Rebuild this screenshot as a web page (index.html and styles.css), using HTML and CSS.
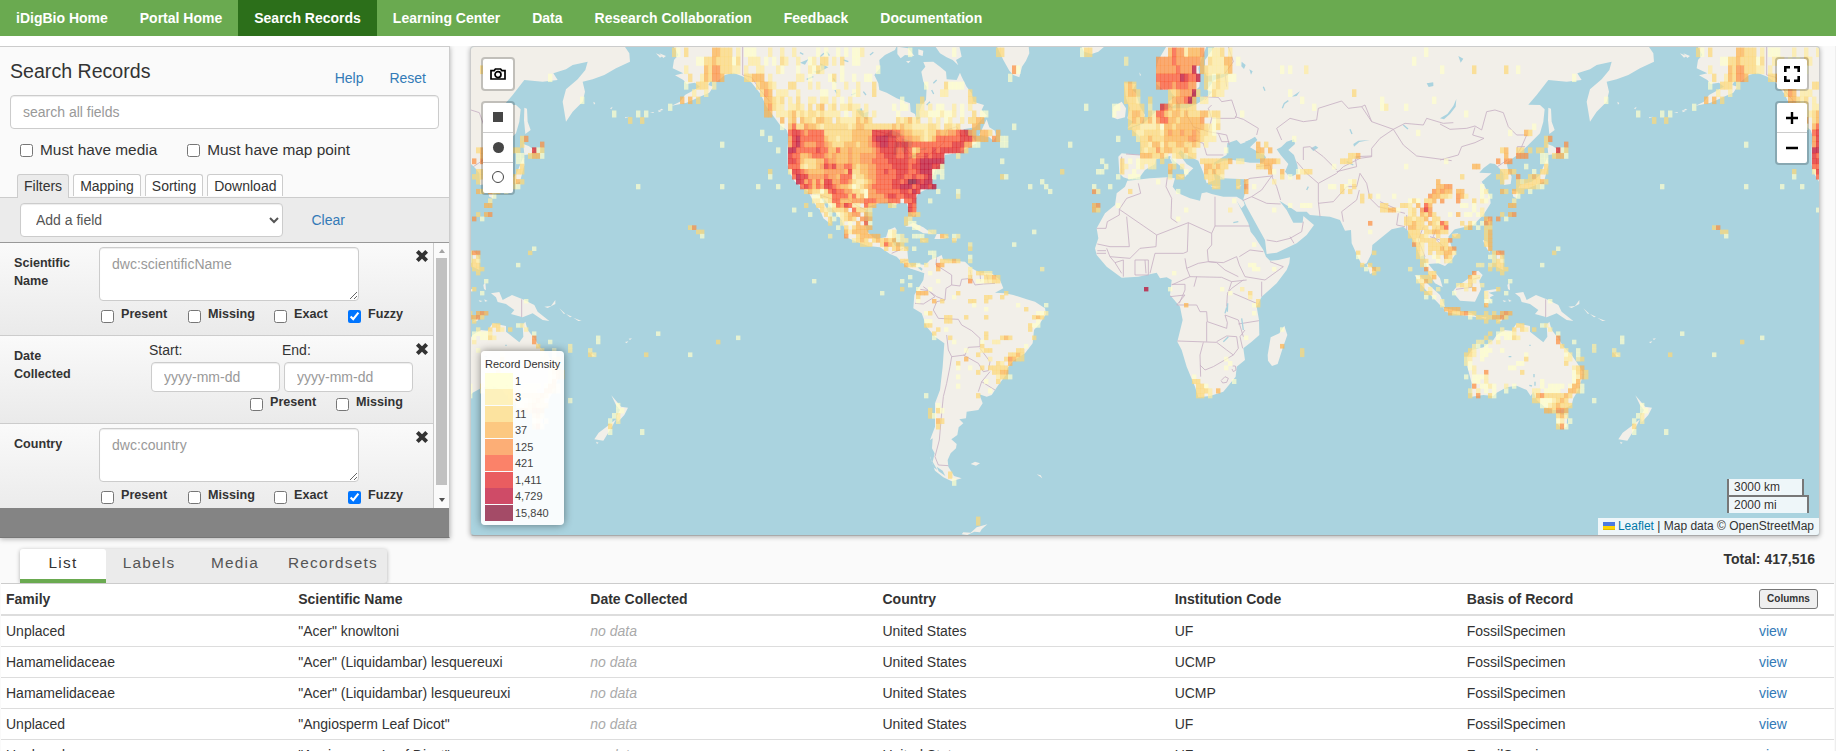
FILE: index.html
```html
<!DOCTYPE html>
<html lang="en">
<head>
<meta charset="utf-8">
<title>Search Records</title>
<link rel="stylesheet" href="styles.css">
</head>
<body>
<nav class="nav">
  <a>iDigBio Home</a><a>Portal Home</a><a class="active">Search Records</a><a>Learning Center</a><a>Data</a><a>Research Collaboration</a><a>Feedback</a><a>Documentation</a>
</nav>
<main class="page">
  <div class="top">
    <section class="panel">
      <div class="panel-head"><h1>Search Records</h1><a class="help">Help</a><a>Reset</a></div>
      <input class="field search" placeholder="search all fields">
      <div class="musts"><label><input type="checkbox">Must have media</label><label><input type="checkbox">Must have map point</label></div>
      <div class="tabs"><span class="on">Filters</span><span>Mapping</span><span>Sorting</span><span>Download</span></div>
      <div class="add"><select class="field"><option>Add a field</option></select><a>Clear</a></div>
      <div class="list">
        <div class="filters">
          <div class="filter sci">
            <b class="name">Scientific Name</b>
            <textarea class="field" placeholder="dwc:scientificName"></textarea>
            <svg class="x" viewBox="0 0 12 12"><path d="M2 2L10 10M10 2L2 10"/></svg>
            <div class="checks"><label><input type="checkbox">Present</label><label><input type="checkbox">Missing</label><label><input type="checkbox">Exact</label><label><input type="checkbox" checked>Fuzzy</label></div>
          </div>
          <div class="filter date">
            <b class="name">Date Collected</b>
            <div class="dates"><label>Start:<input class="field" placeholder="yyyy-mm-dd"></label><label>End:<input class="field" placeholder="yyyy-mm-dd"></label></div>
            <svg class="x" viewBox="0 0 12 12"><path d="M2 2L10 10M10 2L2 10"/></svg>
            <div class="checks two"><label><input type="checkbox">Present</label><label><input type="checkbox">Missing</label></div>
          </div>
          <div class="filter">
            <b class="name">Country</b>
            <textarea class="field" placeholder="dwc:country"></textarea>
            <svg class="x" viewBox="0 0 12 12"><path d="M2 2L10 10M10 2L2 10"/></svg>
            <div class="checks"><label><input type="checkbox">Present</label><label><input type="checkbox">Missing</label><label><input type="checkbox">Exact</label><label><input type="checkbox" checked>Fuzzy</label></div>
          </div>
        </div>
        <div class="bar"><i class="up"></i><i class="thumb"></i><i class="down"></i></div>
      </div>
    </section>

    <section class="map">
      <svg class="world" viewBox="471 47 1348 488">
        <defs>
        <g id="world">
          <g class="land" transform="translate(780 40) scale(.33333)">
            <path d="M-320 18L-305 45-318 60-322 85-290 100-315 106-290 120-280 132-255 128-240 140-285 165-300 185-325 197-280 188-235 168-212 158-200 140-215 135-208 122-190 125-165 105-140 98-110 110-85 128-60 160-40 200-15 235 0 255 20 270 26 290 22 330 23 375 30 400 45 425 65 442 85 455 95 475 110 500 120 510 130 535 152 552 150 535 142 510 130 485 118 462 135 480 160 510 185 540 195 570 195 590 230 605 265 618 300 622 330 642 350 650 365 665 385 683 400 688 420 680 435 692 445 690 435 675 415 672 395 680 385 665 382 630 370 620 345 618 335 600 348 590 350 570 345 562 325 570 318 592 285 597 262 575 252 545 255 515 265 500 300 488 330 485 345 495 360 488 380 490 387 510 400 530 410 520 405 480 415 460 455 440 458 410 470 380 492 365 495 345 530 340 560 325 590 310 578 290 558 288 550 268 585 262 608 235 622 228 605 210 612 195 580 185 575 160 560 140 545 110 540 98 530 120 500 118 498 95 480 80 460 65 430 66 436 80 424 95 430 125 440 140 438 180 425 195 418 215 420 235 410 240 405 222 392 215 390 190 350 175 320 158 298 150 295 130 283 105 300 85 298 60 315 45 345 30 350 18Z"/>
            <path d="M465 18L480 40 500 52 518 60 535 76 528 60 545 50 538 18ZM352 20L385 25 403 48 375 45 362 55 352 42ZM415 28L430 32 428 48 415 44ZM378 64L392 62 385 70ZM598 285L620 238 628 262 645 272 648 290 640 302 628 292ZM650 18L670 60 688 92 700 105 718 112 726 80 738 62 748 40 746 18ZM903 18L912 35 935 42 955 35 975 18ZM375 560L400 548 430 562 458 582 430 580 395 560ZM463 597L470 582 490 582 508 592 488 597ZM515 596L530 594 530 602 517 602ZM424 600L440 602 430 606ZM-365 212L-355 206-350 210ZM-390 219L-380 216-378 219ZM-365 210l10 3-9 4zM-362 40l20 8-8 6zM-465 232l12-2-12 5zM-510 205l8-5-4 8zM-560 185l6 4-4 5z"/>
            <path class="water" d="M305 290L335 270 370 285 350 295 320 292ZM345 300L358 305 352 345 340 345ZM365 295L400 305 392 325 380 320 375 345 365 330ZM385 352L425 335 415 345 385 360ZM412 330L440 322 438 330ZM228 208L245 205 250 220 265 215 262 240 240 225ZM120 70l25 12-20 10zM100 95l30-8-15 14zM60 68l25-10-10 16z"/>
            <path class="ice" d="M120 50l12-10M140 35l8 12M80 118l20-8M165 150l6 10M190 60l15 5M250 155l8 10M270 45l10-8M60 38l10 5M215 165l12-6M160 115l8 14M310 150l8-2M440 195l10-10M455 150l6 12M470 120l-10 10"/>
          </g>
          <g class="land" transform="translate(880 240) scale(.33333)">
            <path d="M85 83L110 80 125 92 133 78 150 60 175 50 185 45 190 60 215 62 255 65 275 85 300 98 335 100 360 120 370 145 345 158 375 160 400 165 440 178 465 185 495 205 498 222 480 250 462 270 458 310 435 340 400 362 382 385 378 405 355 435 335 465 320 470 298 463 308 490 295 510 260 515 258 535 238 538 250 550 236 562 232 585 214 598 230 612 228 625 212 640 203 660 205 680 222 708 245 715 215 724 190 712 165 692 150 650 150 600 165 560 165 490 180 450 188 380 193 310 165 290 140 260 125 220 100 205 103 165 115 145 130 120 133 100ZM272 672L285 665 300 670 288 677ZM245 883L250 877 272 878 290 862 322 853 305 868 300 877 283 875 262 885ZM470 703l12 3 5 9zM318 818l14-1zM400 806l12 2z"/>
            <path class="water" d="M150 600l8-5-2 30 8 15-6 25 14 25-12-8-12-40zM170 680l18 12 8 16-20-14z"/>
            <path d="M1163 345L1172 292 1198 280 1213 257 1222 285 1208 325 1193 372 1176 378 1164 362Z"/>
          </g>
          <g class="land" transform="translate(1090 40) scale(.33333)">
            <path d="M112 422L135 420 180 415 230 412 255 415 248 440 262 458 300 475 330 482 335 460 350 457 365 462 400 470 440 470 460 482 464 495 454 505 440 482 475 550 482 575 495 592 520 630 528 650 540 662 565 660 600 652 598 670 590 690 560 730 515 770 500 800 507 840 508 885 485 905 460 925 465 960 440 980 437 1010 400 1055 360 1068 325 1072 315 1040 290 980 275 930 262 905 278 840 270 800 240 765 245 720 230 712 210 715 200 698 145 710 95 713 50 680 20 645 15 625 25 595 20 565 45 520 75 495 80 460 105 440Z"/>
            <path d="M350 18L335 55 325 85 330 115 328 140 305 162 300 182 285 192 265 190 255 170 245 160 240 148 220 150 200 132 198 90 205 60 230 18ZM375 18L345 60 345 95 350 108 400 102 425 98 400 112 372 120 358 140 350 150 365 155 340 180 320 192 290 205 260 205 245 205 236 185 255 170 262 190 250 198 230 208 200 212 180 232 158 252 128 262 125 268 150 290 155 330 150 345 95 340 85 350 88 400 100 412 118 418 150 410 165 390 195 372 198 358 240 348 255 365 280 385 285 412 296 398 310 385 290 372 265 340 272 330 285 342 325 362 340 398 350 430 375 420 370 395 372 368 400 350 410 345 412 310 440 300 452 312 470 305 495 290 502 300 480 322 520 345 518 368 480 368 430 360 400 362 372 375 375 400 400 415 465 418 470 440 460 478 470 500 500 555 525 600 530 642 560 638 620 610 650 585 672 555 640 528 638 548 610 548 590 510 568 482 600 502 620 515 650 515 660 525 720 530 750 540 765 572 783 570 785 610 815 675 830 670 845 640 847 615 905 568 940 560 952 570 975 610 990 650 1003 645 1015 700 1035 730 1058 742 1050 715 1015 672 1045 670 1065 678 1085 660 1098 640 1085 620 1075 590 1100 560V18Z"/>
            <path d="M103 130L138 132 128 150 138 160 150 200 165 225 155 250 112 265 130 245 112 235 120 205 108 175ZM68 232L70 200 95 185 108 205 105 232 82 238ZM240 355L245 345 246 368ZM234 372L246 370 244 390 235 390ZM262 405L285 407 275 415ZM360 437L392 440 375 445ZM438 440L455 434 445 446ZM830 672L842 678 856 695 840 702ZM618 645l8 1zM148 97l5 8-3 3z"/>
            <path class="water" d="M573 322L590 305 612 298 615 312 595 330 612 345 622 375 625 400 600 412 585 395 595 372 572 345 560 328ZM518 340l10 12-8 16zM465 305l28-10 8 4-25 12zM662 325l15-8 8 6-15 10zM790 312l15-10 35-2-32 6-16 14zM680 318l5-2zM795 352l20-4-14 8zM455 65l12 10-5 12-8-8zM478 88l10 6-5 10zM445 42l15 8zM470 22l20 15zM605 170l25-16-10 14zM1010 130l20-3 12 20-8-10-18 4zM1045 235l40-22v10l-25 14z"/>
            <path class="river" d="M577 205l6-15 12-8M520 140l5 12M780 268l6 14M1035 160l3 25M940 255l14 12M770 365l20 10M655 440l-5 10M430 548l15-3"/>
          </g>
          <g class="land" transform="translate(1440 40) scale(.33333)">
            <path d="M-20 18V595L0 580 45 568 100 555 130 525 152 490 150 470 135 440 125 425 142 410 155 400 118 398 130 385 150 370 165 372 178 385 190 400 192 435 212 432 215 410 203 385 200 368 232 345 262 318 300 280 310 245 314 208 300 195 265 194 290 165 325 120 380 125 425 120 412 100 450 88 470 75 515 65 508 90 485 118 450 148 440 185 450 245 470 215 500 185 507 155 500 125 530 118 565 105 600 85 642 65 640 40 625 18ZM325 203L333 206 335 245 344 270 328 282 324 240ZM322 312L338 318 355 330 345 342 325 345ZM322 352L325 375 312 425 295 432 265 445 235 445 240 435 275 425 300 405 312 375ZM215 452L235 455 230 475 220 470ZM140 540L152 532 150 558ZM35 582L55 580 45 592ZM720 40l20 8-8 5zM710 100l6 4z"/>
            <path class="water" d="M0 235L22 222 40 198 49 177 47 200 30 222 12 238ZM55 48l15 8-8 12zM200 195l12-2zM110 268l8 6z"/>
          </g>
          <g class="land" transform="translate(1380 240) scale(.33333)">
            <path d="M104 105L122 110 150 138 180 165 195 200 180 195 145 158 118 128ZM190 203L230 212 275 220 292 232 240 225 195 215ZM220 152L230 140 262 118 285 95 295 92 308 105 298 122 303 148 285 185 240 182 228 168ZM313 152L350 147 352 153 326 158 342 166 330 172 336 190 326 178 324 202 315 195ZM405 160L430 156 440 180 468 165 500 178 535 195 545 215 580 243 560 240 530 220 500 232 465 222 475 210 450 192 425 186 420 172ZM565 200L585 198 598 180 598 192 575 204ZM610 205l18 16-5 0zM630 222l18 8-6 2zM652 233l25 10-10 0zM300 230l20 2-4 5zM350 245l20-14-6 12zM262 350L275 330 310 322 340 300 350 285 375 270 395 272 410 250 450 258 450 275 490 307 502 290 500 255 508 245 515 270 535 295 550 320 575 345 592 370 608 395 606 415 595 450 580 475 575 495 550 508 520 510 495 502 470 480 460 455 452 468 440 450 410 437 380 442 350 458 340 468 310 465 275 470 275 430 262 380ZM528 522L562 525 560 560 545 567 530 548ZM766 466L780 482 795 500 816 503 805 525 785 547 782 528 792 510 780 495ZM780 538L768 560 742 602 715 598 728 578 755 558ZM720 605l8 3-5 4zM807 306l10-2-5 6zM818 296l10-1-6 5zM382 135l6-8 2 24-6-4zM368 181l12 2-8 3zM385 178l10 5-8 2zM408 181l10 5zM395 150l6 16zM308 0L322 5 330 40 320 25ZM350 30L368 50 370 90 350 80ZM710 655l3 3zM735 682l3 1zM715 265l3 18zM700 335l18 14-10 0zM320 145l10-3zM410 218l4-6zM425 235l-5-4z"/>
            <path class="river" d="M386 350h8M448 316h4M462 402v10M465 425v12M448 436l8 2"/>
          </g>
          <g class="borders" transform="translate(880 240) scale(.33333)">
            <path d="M170 50L168 75 195 92 215 105 215 135 198 145 195 180 170 185 160 210 175 235 235 238 245 255 275 272 300 295 300 320 265 322 255 345 215 350 205 330 200 285M120 148L145 152 165 170 130 192 105 190M130 140L170 170 195 180M215 135L240 138 245 118 275 115 285 135 310 132 345 130M270 90L275 115M300 100L302 125M320 102L325 130M250 345L295 370 310 395 325 392 330 365 300 325M330 395L305 425 295 455M305 425L345 450M215 350L210 380 200 430 190 470 185 520 178 600 165 650 175 675 205 677"/>
          </g>
          <g class="borders" transform="translate(780 40) scale(.33333)"><path d="M-112 20V105L-85 112-60 150-30 185M25 269H270L340 285 400 350 440 350 490 310 500 270 530 260 545 290M80 460L120 465 165 480 205 478 235 500 258 510M335 640L370 625M365 665L385 660"/></g>
          <g class="borders" transform="translate(1090 40) scale(.33333)">
            <path d="M145 430L152 460 110 475 88 508V525L52 545 48 565H20M88 508L200 585 295 548 365 580 375 558V470M110 530L118 620H60L22 612M232 412L228 440 245 475 243 535 262 548M375 558H480M200 585L198 620 150 625 120 655 60 650 50 625M295 548L292 635 280 640 195 640 180 700M365 580V615L352 630 355 665 325 670 290 685 285 655M355 665L380 668 405 690 445 710M355 665L400 668 440 650 448 675 465 710 525 720 580 680 540 665M448 650L480 630 520 635M290 685L300 710 245 735M300 710L395 712 425 725 470 720M312 740L320 710M20 640H48M22 632H48M75 668L95 700M100 660L100 710M135 660V705H175V660H135M165 660L168 700M60 650L75 668 100 660"/>
            <path d="M245 733H285V750L268 790M240 770L285 765 260 795H320L330 815H350L352 845 410 865 412 848M350 845V905M262 903L380 907 410 930 430 945 445 925 440 890 410 888 380 905M340 907L330 945 332 1010M330 975L345 990 370 980 430 945M412 848L405 825 445 840 460 890M395 1020l10-10 10 5-5 12-12 2-5-8M428 978l8 0 2 12-8 5-4-8M458 925L450 890 465 870M410 800L412 765 425 725M430 760L500 790M445 852L507 842M515 770V725M412 760L425 745 460 720"/>
            <path class="river" d="M413 790L412 815M455 835L460 870M400 905l15-15M405 820l5-18"/>
            <path d="M458 482L485 470 515 450 545 408 480 415 460 425M485 470L530 490 572 492M545 408L560 440 572 480M530 600L560 605 600 595 635 575 640 545M600 590L612 610M500 380L540 375 548 410M575 300L560 265 600 235 640 245 680 240 685 205 755 183 775 205 815 200 845 245 910 268 870 295 845 325V350L810 355 760 380 740 400 685 430 650 400 620 365M640 360V322L660 320 700 350 740 390M910 268L945 250 1000 255 1010 235 1060 250 1090 248M910 268L940 315 980 348 1085 362M815 200L825 195 845 245M685 430V485L690 530M685 490L730 485 770 440 800 440 810 400 830 430 840 475 865 500 925 515 945 520M760 545L755 515 800 480 808 450M925 520L920 555 945 560M950 525L950 570M870 485L915 505M740 395L800 380 795 350 845 348M345 180L365 155M340 170L385 172 395 185 425 180 440 225 435 235 365 235 355 205 365 195M435 230L460 238 505 265 500 285M365 235L355 275 385 280 410 285 418 315M355 275L310 260 290 225 290 205M310 300L340 310 350 345 400 345M385 280L395 305 418 305M310 260L330 280M290 310L325 300M415 20L430 65 405 100 410 140M108 342L150 345M95 350V400M1040 560L1030 590 1060 620 1065 670M1000 560L985 600 1005 650M1020 590L1050 600"/>
          </g>
          <g class="borders" transform="translate(1440 40) scale(.33333)"><path d="M0 252L30 268 80 265 105 258 125 270 140 215 165 210 190 218 205 260 230 285 260 285 245 320 230 345M105 262L98 285 132 295 105 308 65 320 55 345 0 360M232 345V320H255M172 380L202 360"/></g>
          <g class="borders" transform="translate(1380 240) scale(.33333)"><path d="M497 178V231M228 148L250 145 275 142 278 118 300 112"/></g>
          <g id="cells"></g>
        </g>
        </defs>
        <use href="#world"/><use href="#world" x="-1024"/><use href="#world" x="1024"/>
      </svg>
      <div class="ctl camera"><svg viewBox="0 0 16 12"><path d="M1 2.6H4.2L5.4 1H10.6L11.8 2.6H15V11H1Z"/><circle cx="8" cy="6.6" r="3"/></svg></div>
      <div class="ctl shapes"><span><i class="sq"></i></span><span><i class="dot"></i></span><span><i class="ring"></i></span></div>
      <div class="ctl full"><svg viewBox="0 0 16 16"><path d="M1.3 6V1.3H6M10 1.3H14.7V6M14.7 10V14.7H10M6 14.7H1.3V10"/></svg></div>
      <div class="ctl zoom"><span><svg viewBox="0 0 12 12"><path d="M6 0V12M0 6H12"/></svg></span><span><svg viewBox="0 0 12 12"><path d="M0 6H12"/></svg></span></div>
      <div class="legend">
        <div>Record Density</div>
        <p><i class="c1"></i>1</p><p><i class="c2"></i>3</p><p><i class="c3"></i>11</p><p><i class="c4"></i>37</p><p><i class="c5"></i>125</p><p><i class="c6"></i>421</p><p><i class="c7"></i>1,411</p><p><i class="c8"></i>4,729</p><p><i class="c9"></i>15,840</p>
      </div>
      <div class="scale"><span class="km">3000 km</span><span class="mi">2000 mi</span></div>
      <div class="attr"><svg viewBox="0 0 12 8"><path fill="#4C7BE1" d="M0 0h12v4H0z"/><path fill="#FFD500" d="M0 4h12v3H0z"/><path fill="#E0BC00" d="M0 7h12v1H0z"/></svg><a>Leaflet</a> | Map data © OpenStreetMap</div>
    </section>
  </div>

  <div class="results-head">
    <div class="rtabs"><span class="on">List</span><span>Labels</span><span>Media</span><span class="wide">Recordsets</span></div>
    <b class="total">Total: 417,516</b>
  </div>
  <table class="results">
    <thead><tr><th>Family</th><th>Scientific Name</th><th>Date Collected</th><th>Country</th><th>Institution Code</th><th>Basis of Record</th><th class="last"><button>Columns</button></th></tr></thead>
    <tbody>
      <tr><td>Unplaced</td><td>"Acer" knowltoni</td><td class="none">no data</td><td>United States</td><td>UF</td><td>FossilSpecimen</td><td><a>view</a></td></tr>
      <tr><td>Hamamelidaceae</td><td>"Acer" (Liquidambar) lesquereuxi</td><td class="none">no data</td><td>United States</td><td>UCMP</td><td>FossilSpecimen</td><td><a>view</a></td></tr>
      <tr><td>Hamamelidaceae</td><td>"Acer" (Liquidambar) lesqueureuxi</td><td class="none">no data</td><td>United States</td><td>UCMP</td><td>FossilSpecimen</td><td><a>view</a></td></tr>
      <tr><td>Unplaced</td><td>"Angiosperm Leaf Dicot"</td><td class="none">no data</td><td>United States</td><td>UF</td><td>FossilSpecimen</td><td><a>view</a></td></tr>
      <tr><td>Unplaced</td><td>"Angiosperm Leaf Dicot"</td><td class="none">no data</td><td>United States</td><td>UF</td><td>FossilSpecimen</td><td><a>view</a></td></tr>
    </tbody>
  </table>
</main>
<script src="density.js"></script>
</body>
</html>
```
FILE: styles.css
```css
* { box-sizing: border-box; }
body { margin: 0; height: 751px; overflow: hidden; font: 14px/20px "Liberation Sans", Arial, sans-serif; color: #333; background: #fff; }
a { color: #337ab7; text-decoration: none; }
.nav { display: flex; height: 36px; background: #6aaa50; }
.nav a { padding: 0 16px; color: #fff; font-weight: bold; line-height: 36px; }
.nav .active { background: #2c6f1a; }
.page { margin-top: 10px; background: #fafafa; border-right: 1px solid #eee; height: 705px; overflow: hidden; }
.top { display: flex; gap: 20px; height: 492px; }
.field { border: 1px solid #ccc; border-radius: 4px; background: #fff; font: 14px/20px "Liberation Sans", Arial, sans-serif; color: #555; box-shadow: inset 0 1px 1px rgba(0,0,0,.075); padding: 6px 12px; outline: 0; }
.field::placeholder { color: #999; opacity: 1; }
input[type=checkbox] { width: 13px; height: 13px; margin: 0; }

.panel { width: 450px; height: 492px; border: 1px solid #ccc; border-left: 0; border-bottom: 1px solid #777; box-shadow: 0 1px 5px rgba(0,0,0,.3); background: linear-gradient(#fafafa 0 200px, #848484 200px); display: flex; flex-direction: column; }
.panel > * { flex: none; background: #fafafa; }
.panel-head { display: flex; align-items: flex-start; height: 48px; padding: 14px 23px 0 10px; }
.panel-head h1 { flex: 1; margin: -1px 0 0; font-size: 19.6px; line-height: 22px; font-weight: normal; }
.panel-head a { margin-top: 7px; line-height: 20px; }
.panel-head .help { margin-right: 26px; }
.panel .search { margin: 0 10px; height: 34px; background: #fff; }
.musts { display: flex; gap: 30px; height: 45px; padding: 11px 20px 0; font-size: 15.4px; line-height: 20px; }
.musts label { display: flex; align-items: center; gap: 7px; height: 20px; }
.tabs { display: flex; gap: 4px; height: 24px; padding-left: 17px; border-bottom: 1px solid #ccc; }
.tabs span { height: 22px; padding: 0 6px; border: 1px solid #ccc; border-bottom: 0; border-radius: 3px 3px 0 0; background: #fff; line-height: 22px; }
.tabs .on { height: 24px; background: #ebebeb; }
.panel .add { display: flex; height: 45px; padding: 5px 20px; background: #ebebeb; border-bottom: 1px solid #999; }
.add .field { width: 263px; height: 34px; padding-left: 11px; }
.add a { margin: 7px 0 0 28.5px; }
.list { display: flex; height: 265px; overflow: hidden; }
.filters { width: 434px; border-right: 1px solid #ccc; }
.filter { display: grid; grid-template-columns: 85px 1fr 12px; height: 93px; padding: 4px 5px 0 14px; border-bottom: 1px solid #ccc; background: linear-gradient(#fafafa, #eaeaea); align-content: start; }
.filter.date { height: 88px; }
.name { font-size: 12.6px; line-height: 18px; margin-top: 7px; width: 62px; }
.filter textarea { width: 260px; height: 54px; display: block; }
.x { width: 14px; height: 14px; margin: 2px 0 0 -1px; }
.x path { stroke: #333; stroke-width: 3.3; fill: none; }
.checks { grid-column: 2 / 4; display: grid; grid-template-columns: 87px 86px 74px 70px; padding-left: 2px; height: 28px; font-size: 12.6px; font-weight: bold; line-height: 18px; margin-top: 4px; }
.checks label { display: flex; gap: 7px; }
.checks input { margin-top: 5px; }
.checks.two { grid-template-columns: 86px 80px; padding-left: 151px; margin-top: 1px; }
.dates { display: flex; gap: 4px; padding-left: 52px; }
.dates label { display: block; width: 129px; white-space: nowrap; text-indent: -2px; }
.dates .field { width: 129px; height: 30px; display: block; margin-top: 2px; text-indent: 0; }
.bar { width: 15px; background: #fafafa; display: flex; flex-direction: column; align-items: center; }
.up, .down { border: 3.5px solid transparent; }
.up { border-top: 0; border-bottom: 4px solid #a3a3a3; margin: 6px 0 5px; }
.thumb { width: 11px; height: 227px; background: #c1c1c1; }
.down { border-bottom: 0; border-top: 4px solid #505050; margin-top: 13px; }

.map { position: relative; width: 1350px; height: 490px; border: 1px solid #ccc; border-bottom-color: #aaa; border-radius: 4px; background: #aad3df; overflow: hidden; box-shadow: 0 1px 5px rgba(0,0,0,.3); }
.world { display: block; width: 1348px; height: 488px; }
.land { fill: #f2efe9; }
.land .water { fill: #aad3df; }
.land .ice, .river { fill: none; stroke: #aad3df; stroke-width: 4; }
.borders { fill: none; stroke: #c8b2c5; stroke-width: 2.6; stroke-linejoin: round; }
.ctl { position: absolute; border: 2px solid rgba(0,0,0,.2); border-radius: 4px; background: #fff; background-clip: padding-box; width: 34px; }
.ctl span { display: flex; align-items: center; justify-content: center; height: 30px; border-bottom: 1px solid #ccc; }
.ctl span:last-child { border-bottom: 0; }
.camera { left: 10px; top: 10px; height: 34px; display: flex; align-items: center; justify-content: center; }
.camera svg { width: 16px; height: 12px; fill: none; stroke: #000; stroke-width: 1.7; }
.shapes { left: 10px; top: 54px; }
.shapes span { padding-bottom: 1px; }
.shapes span:last-child { padding: 0 1px 2px 0; }
.sq { width: 10px; height: 10px; background: #464646; }
.dot { width: 11px; height: 11px; background: #464646; border-radius: 50%; }
.ring { width: 12px; height: 12px; border: 1px solid #464646; border-radius: 50%; }
.full { right: 10px; top: 10px; height: 34px; display: flex; align-items: center; justify-content: center; }
.full svg { width: 16px; height: 16px; fill: none; stroke: #000; stroke-width: 2.6; }
.zoom { right: 10px; top: 54px; }
.zoom svg { width: 12px; height: 12px; stroke: #000; stroke-width: 2.4; }
.legend { position: absolute; left: 10px; bottom: 10px; width: 83px; height: 174px; padding: 5px 4px; background: rgba(255,255,255,.93); border-radius: 4px; box-shadow: 0 0 8px rgba(0,0,0,.45); font-size: 11px; line-height: 17px; color: #333; white-space: nowrap; }
.legend p { display: flex; margin: 0; height: 16.45px; line-height: 17px; color: #444; gap: 2px; }
.legend i { width: 28px; height: 16px; opacity: .7; }
.c1 { background: #ffffcc; fill: #ffffcc; }
.c2 { background: #ffeda0; fill: #ffeda0; }
.c3 { background: #fed976; fill: #fed976; }
.c4 { background: #feb24c; fill: #feb24c; }
.c5 { background: #fd8d3c; fill: #fd8d3c; }
.c6 { background: #fc4e2a; fill: #fc4e2a; }
.c7 { background: #e31a1c; fill: #e31a1c; }
.c8 { background: #bd0026; fill: #bd0026; }
.c9 { background: #800026; fill: #800026; }
#cells { fill-opacity: .7; }
.scale { position: absolute; right: 10px; bottom: 22px; width: 82px; display: flex; flex-direction: column; align-items: flex-start; font-size: 12px; line-height: 15px; }
.scale span { border: 2px solid #777; background: rgba(255,255,255,.8); padding-left: 5px; text-shadow: 1px 1px #fff; }
.scale .km { width: 77px; height: 16px; border-top: 0; border-bottom: 0; line-height: 16px; }
.scale .mi { width: 82px; height: 18px; border-bottom: 0; line-height: 17px; }
.attr { position: absolute; right: 0; bottom: 0; height: 17px; padding: 0 5px; background: rgba(255,255,255,.8); font-size: 12px; line-height: 16px; }
.attr svg { width: 12px; height: 8px; margin-right: 3px; }
.attr a { color: #0078a8; }

.results-head { display: flex; justify-content: space-between; height: 45px; padding: 11px 20px 0; overflow: hidden; }
.rtabs { display: flex; height: 34px; border-radius: 3px; background: #ebebeb; box-shadow: 0 1px 4px rgba(0,0,0,.3); color: #555; font-size: 15.4px; letter-spacing: 1.2px; line-height: 28px; text-align: center; }
.rtabs span { min-width: 86px; padding: 0 10px; }
.rtabs .wide { padding-right: 9px; }
.rtabs .on { background: #fff; color: #333; border-bottom: 4px solid #6aaa50; border-radius: 3px 3px 0 0; }
.total { line-height: 20px; }
.results { table-layout: fixed; width: 1833px; margin-left: 1px; border-collapse: separate; border-spacing: 0; border-top: 1px solid #ccc; background: #fff; }
.results th, .results td { text-align: left; padding: 5px; height: 31px; line-height: 20px; border-bottom: 1px solid #ddd; width: 292.16px; white-space: nowrap; }
.results th { border-bottom-width: 2px; height: 32px; }
.results .last { width: 80px; padding: 0 5px; }
.results .none { color: #aaa; font-style: italic; }
button { display: block; font: bold 10px/16px "Liberation Sans", Arial, sans-serif; color: #333; width: 59px; height: 20px; padding: 0; border: 1px solid #767676; border-radius: 3px; background: #efefef; }
```
FILE: density.js
```js
// Record density grid. Web Mercator at zoom 2: 1024px world, longitude 0 at x=1144, equator at y=291.
// Each entry is "x,y,levels": a run of cells going east, in thirds of a pixel from the region's origin.
const STEP = 180 / 128;
const R = 1024 / (2 * Math.PI);
const yOf = k => 291 - R * Math.asinh(Math.tan(k * STEP * Math.PI / 180));
const rowOf = y => Math.floor(Math.atan(Math.sinh((291 - y) / R)) * 180 / Math.PI / STEP);

const regions = [
  [780, 40, `
2,36,2..2.....1.1..1.1.112...........1..........1
2,63,3...2..12.33.2.3..11
2,88,1...1..2132....1........1
2,112,....22.1....13.1..1..11
2,136,..33...2.2...1..2..2...3............1....31111
2,159,22..2.....11..2...12...3................22.....3
2,180,..2.3..22.22.2.1.2............1....3...........33
2,201,3.2232.3.34.23.22322.2......1.11..22.2.11..2.1.2..
2,221,323423233232222.1.2332.2.....1....2221112112.1..3.11
2,240,4.34.43324433.322224343......323423..2.2.12..2.3344
2,259,1.46335443233333323443333333434332222332.3323...44
2,278,..67765666633333334444477777665443332335445567754.443.4
2,296,..57866666643323334444578887766554432346666667775444.54
2,313,..578655566543334443445678877777666666666667775554
2,330,..886666676644644544444567777667634666767777763
2,347,..766445666545444544555566777667646676777
2,363,..776433344655444544555666677777667888888
2,379,..666323345767556643445566667777677888773
2,394,..27765444455555473344556676677766788811
2,410,...687755556554666233455666667766766781
2,425,....8756464775566532234566667767998788
2,440,.....6764657765443123456666677888678878
2,454,......34331367665533215566666677687
2,468,........11333666646341555567766777
2,482,........2212366444555666555666.667
2,496,.........33.12657622.644...32...76
2,510,..........3223334.63332.........76
2,523,...........31.123455.43.........443
2,536,............31.2343.554........32
2,549,............3..2.1.4.64........3.1
2,563,..............1.3.34444
2,576,................424444.....12
2,589,................5..344444..1212
2,602,..................2343.343434122
2,616,....................333..364343
2,630,..........................3.3423.1
-322,36,31.3......44333.2.111...2..2
-250,63,11334333313..222.1.1..2
-286,88,2....435533322.2..22...2
-274,112,3..243554.....33444.2
-286,136,1..333.2..........34432
-262,159,2..2.............354.22
-298,180,4.4.3................44323
-46,201,45322
-46,221,44.22
-332,200,1 -426,220,1.1 -500,220,1 -452,240,3 -415,240,3 -55,278,1 -32,296,1 -175,313,1 -8,330,1 -32,394,3 -32,408,1
-428,439,1 -175,439,1 -68,439,1 -8,439,1 -273,563,35 -247,576,33 -235,588,1
41,509,1 90,522,1 78,495,3 102,722,1 150,587,2 270,549,1 450,481,1 474,454,1 534,454,1 534,467,2 486,395,1 486,408,1
480,380,2 535,347,2 580,313,11 666,362,1 666,409,31 666,290,11 666,312,11 702,259,1 870,313,1 846,394,3 750,439,1
786,425,1 798,439,1 810,454,1 918,200,1 966,362,2 978,378,1 954,394,11 990,439,1 942,454,52 942,495,45 942,509,43
762,574,1 702,613,1 786,686,2 654,36,33 702,86,51 690,112,1 906,36,133 390,549,1 402,560,11 402,588,111 426,600,33
450,574,22 486,588,43 522,588,12 522,601,3 570,613,2 570,626,3 570,650,1 570,662,2 366,662,33 378,673,433
450,638,11 462,650,1 486,662,33343 474,674,54 474,686,4 390,710,1 366,722,1 414,674,1 442,674,2 450,698,1 474,722,1
570,686,2 570,698,2 570,710,3 570,722,5 594,698,33 618,698,22 594,722,1122 642,722,33 622,710,3343`],
  [880, 240, `
798,147,8 66,122,1 66,147,3 90,110,1 90,134,1 6,159,1 110,147,1 112,160,444 112,172,3 112,184,1 150,98,1 174,122,1
150,147,1 160,184,4.3 222,172,1 234,159,3 270,184,33 282,196,1 318,172,33 318,184,3 366,159,.3 366,172,3 318,208,1
318,232,3 258,232,3 138,220,13 138,244,11 138,257,33 196,232,33 196,244,33 162,281,3 174,268,3 198,268,1 162,293,1
210,293,3 222,306,1 414,196,1 438,208,3 462,232,343 474,220,112 498,196,1 474,244,1 450,257,311 450,269,3 462,293,3
318,281,3 318,293,3 366,293,343 342,306,22 306,306,1 306,319,3 306,331,233 294,344,3 258,331,1 258,357,4 234,370,3
234,383,1 270,383,1 234,410,1 234,438,1 330,357,2 354,370,32 306,383,3.3 342,383,3333 294,397,3 342,397,3344
354,410,2331 354,424,3 318,424,1 330,452,1 294,466,3 390,344,3343 414,331,33 438,319,1 378,357,35433 390,370,4
138,466,1 174,496,1 174,510,3 186,510,1 150,510,3 150,526,3 162,526,1 174,543,43 174,560,3 210,705,3 222,727,1 294,842,3
485,87,2 868,147,1 880,98,1 918,196,4 1026,147,1 1050,159,1 1086,147,2 1110,159,3 1110,172,2 1122,196,1 1134,184,3
1134,196,3 1122,220,1 1110,74,11 1122,87,11 1182,87,1 1122,14,1 1098,293,1 1206,268,1 1206,319,4 1266,331,3 1266,344,3
1038,357,1 1038,383,1 1050,370,1 1062,424,1 942,410,1 942,424,33 954,438,331 954,452,3332 954,466,33.2 1014,452,4`],
  [1090, 40, `
235,36,465524445.1223.2
199,63,555565555554.322244.1
199,88,5555565558.43222234
199,112,66666687668.32132211
199,136,5666566655..312322
235,159,33455583..1322
235,180,3455684.22
247,200,33433
103,136,343
103,159,3443
103,180,3332..3
115,201,3333.2..764343333
115,220,3443.326643443433344
115,240,3434342566443444445..12
115,259,3332222314434444442333
127,278,322333324544544543321
139,296,2334333444444554322
151,313,332442433443343.2
151,330,32335344333432
151,347,4443342.233233
91,362,3.1.12222.3..1
91,378,32..12.22....3.2
91,394,3..1........4...1
79,409,1..111.........33
330,362,33333334.22
342,378,443433
342,394,43433
342,409,33332
354,425,333 366,439,33
440,425,3.4 440,439,3.5 468,454,4 84,296,1 36,362,1 48,378,1 30,394,1 60,439,1 12,439,1 72,200,11 72,220,1 108,63,2
500,313,4.3 500,330,44.4 500,347,33 520,362,44443 500,378,3344 540,394,41 576,394,4 576,409,3 600,409,1.4 624,394,122
650,394,33 732,378,1 760,362,333 775,347,334 612,296,1 576,88,1 600,88,1 648,88,2 600,159,1 636,180,1 672,200,1
792,159,3 876,180,1 876,201,12 948,200,1 972,63,1 1008,36,1 1056,88,1 1032,180,1 984,278,1 948,378,1 1068,362,1
360,220,23 384,220,3 456,220,1 360,259,233 330,259,4321 372,296,2 408,330,1 240,378,4 240,409,2 204,425,1 120,454,3
84,495,1 264,454,1 288,509,1 264,537,1 432,481,1 420,509,2 492,439,1 552,425,2 552,509,1 600,495,1 636,495,111
720,439,11 756,439,31 780,425,12 792,439,3 756,454,3.3 816,468,3.3 816,481,3 864,468,1 876,495,33 876,509,33444
912,468,1 924,509,1 840,549,5 840,574,1 804,638,3 804,650,1 852,638,3 840,674,3 852,686,43 816,674,3 828,686,1 852,698,3
960,481,13 984,481,1.3.3 930,495,332.4.64 950,509,.23.575 960,523,23.4353 950,536,332334.33 950,549,33433.432
960,563,44333.33 960,576,333.3344 960,589,33332..3 960,600,.323333.34 972,613,532.33333 985,626,32.33333
985,638,32.3.3345 985,650,32..12 1000,662,33..1 1000,674,31 1008,686,5 985,710,1334 985,722,.243 960,686,2
1044,425,4.. 1044,439,4444 1032,454,53.54 1020,468,544 1020,481,34.5 1044,454,4 492,613,1 480,674,11 492,686,11 552,686,1`],
  [1440, 40, `
2,63,.. 2,88,1.......3.......3..1 402,112,1 498,180,1 78,220,1 282,259,1 210,278,1...43 318,296,35 318,313,3....5
186,330,33..33.3.33....73 350,330,71 302,347,11.3441 234,347,555 174,362,5.55 200,347,4 200,330,4 302,362,11 102,378,44
258,378,1 318,378,3 280,394,1.33 66,409,3 180,394,3343 174,409,333..5..343 190,425,3...3343 228,425,32333343
234,439,3333321 2,439,455.. 186,454,43.433.1 2,454,54..44 2,468,332.542 234,468,1 55,481,5 222,481,2 100,481,3.21
126,454,12 126,439,1 126,468,1.1 210,495,44 66,495,11.1 55,523,4.11.12 100,509,1.2 184,523,3.45 35,523,1 170,536,5.1
66,549,3.31.1 80,563,34.1 138,536,45 138,549,54 138,563,33 138,576,34 138,589,34 138,602,34 138,615,34
2,549,64 2,563,46 2,576,33 38,589,33 150,626,4 162,638,355 150,650,12.3 160,662,232 150,674,2333 150,686,3.333
174,698,.3 114,674,22 102,698,5 90,710,42 18,722,1 210,722,1 54,734,2323 126,734,2 2,602,335 2,626,4345 2,638,3.42
2,650,.43 12,662,22 180,626,.. 306,674,1 342,638,3 354,626,1`],
  [1380, 240, `
198,123,1 390,123,1 378,159,1 354,147,3 306,135,2 282,98,5 270,110,4.2 270,123,32 234,135,2..3 222,159,1 258,147,2.4
318,160,2 318,172,2 318,184,11 318,196,4 150,98,33 150,110,34 114,123,22 126,135,3 126,147,3.2 138,159,33 138,172,1.1
174,147,2 186,184,2 186,196,2 198,208,4444 210,220,433453 270,220,33 318,220,3.3.454 294,232,33334453 318,244,3..3
270,232,1 366,268,2 330,281,3.11.3 318,293,3 294,306,22.2.2 282,319,21.1 264,331,32.111 258,344,332.11 258,357,22..1
258,370,21 270,383,12 282,397,2..5 258,410,1.1112 282,424,11.2 282,438,5.1121 270,452,2.2.1 270,466,3.5..31
402,257,.33.. 402,269,3.32.3 366,281,1112 354,293,1.1132 366,331,1 486,257,12 510,269,2 534,281,1 534,293,5 534,305,5
546,319,3 558,331,2 558,344,12 558,357,22 558,370,3 582,357,.23 582,331,.1 594,344,1 582,383,234 582,397,1343 582,410,1243
582,424,14 570,438,1441 570,452,4431 510,438,1111 486,424,1 486,438,1 462,452,22.1111 462,466,2453333343 462,481,331112343
486,496,11234333 498,510,443554 534,525,342 528,542,12.1 534,559,351 582,306,1 642,319,2 642,331,2 702,331,2 702,344,32
726,293,1 726,306,1 906,281,1 1146,293,1 1086,306,3 870,344,3 1002,344,1 642,481,1 786,496,1 786,510,11 774,527,12
762,542,1.2 762,559,3 762,575,1 858,575,1 366,424,.. 378,452,1 402,438,1 438,344,1 438,357,3 414,370,11 390,383,11 426,397,3
378,438,2 342,452,1 510,184,1 486,74,1 522,38,3 534,26,1`]
];

const cells = new Map();
for (const [ox, oy, data] of regions) {
  for (const run of data.trim().split(/\s+/)) {
    const [x, y, levels] = run.split(',');
    const row = rowOf(oy + y / 3);
    const col = Math.floor((ox + x / 3 - 1144) / 4);
    [...levels].forEach((level, i) => {
      if (level !== '.') cells.set((col + i) + ',' + row, level);
    });
  }
}
const group = document.getElementById('cells');
for (const [key, level] of cells) {
  const [col, row] = key.split(',').map(Number);
  const rect = document.createElementNS('http://www.w3.org/2000/svg', 'rect');
  const top = yOf(row + 1);
  rect.setAttribute('x', 1144 + col * 4);
  rect.setAttribute('y', top.toFixed(2));
  rect.setAttribute('width', 4.4);
  rect.setAttribute('height', (yOf(row) - top + 0.4).toFixed(2));
  rect.setAttribute('class', 'c' + level);
  group.appendChild(rect);
}
```
